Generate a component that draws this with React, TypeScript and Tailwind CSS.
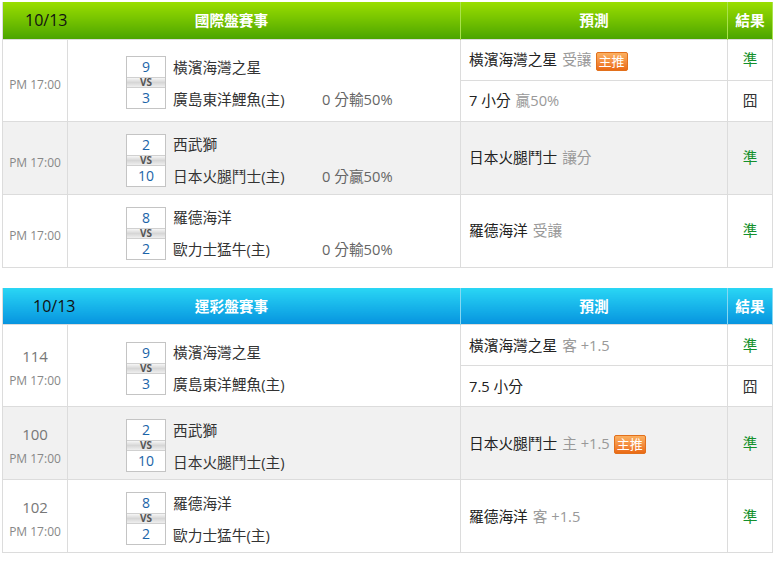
import React from 'react';

type Pred = { team: string; note: string; star?: boolean; result: '準' | '囧' };
type Match = {
  no?: string;
  away: string;
  home: string;
  as: number;
  hs: number;
  line?: string;
  preds: Pred[];
};

const intl: Match[] = [
  {
    away: '橫濱海灣之星',
    home: '廣島東洋鯉魚(主)',
    as: 9,
    hs: 3,
    line: '0 分輸50%',
    preds: [
      { team: '橫濱海灣之星', note: '受讓', star: true, result: '準' },
      { team: '7 小分', note: '贏50%', result: '囧' },
    ],
  },
  {
    away: '西武獅',
    home: '日本火腿鬥士(主)',
    as: 2,
    hs: 10,
    line: '0 分贏50%',
    preds: [{ team: '日本火腿鬥士', note: '讓分', result: '準' }],
  },
  {
    away: '羅德海洋',
    home: '歐力士猛牛(主)',
    as: 8,
    hs: 2,
    line: '0 分輸50%',
    preds: [{ team: '羅德海洋', note: '受讓', result: '準' }],
  },
];

const lottery: Match[] = [
  {
    no: '114',
    away: '橫濱海灣之星',
    home: '廣島東洋鯉魚(主)',
    as: 9,
    hs: 3,
    preds: [
      { team: '橫濱海灣之星', note: '客 +1.5', result: '準' },
      { team: '7.5 小分', note: '', result: '囧' },
    ],
  },
  {
    no: '100',
    away: '西武獅',
    home: '日本火腿鬥士(主)',
    as: 2,
    hs: 10,
    preds: [{ team: '日本火腿鬥士', note: '主 +1.5', star: true, result: '準' }],
  },
  {
    no: '102',
    away: '羅德海洋',
    home: '歐力士猛牛(主)',
    as: 8,
    hs: 2,
    preds: [{ team: '羅德海洋', note: '客 +1.5', result: '準' }],
  },
];

function ScoreBox({ a, h }: { a: number; h: number }) {
  return (
    <div className="w-[40px] border border-[#c4c4c4] bg-white text-center">
      <div className="h-[20px] text-[14px] leading-[20px] text-[#1b64a8]">{a}</div>
      <div className="h-[11px] border-y border-[#d0d0d0] bg-gradient-to-b from-[#f6f6f6] via-[#d6d6d6] to-[#efefef] text-[10px] font-bold leading-[9px] text-[#555]">
        VS
      </div>
      <div className="h-[20px] text-[14px] leading-[20px] text-[#1b64a8]">{h}</div>
    </div>
  );
}

function Star() {
  return (
    <span className="ml-[4px] inline-block h-[19px] rounded-[2px] border border-[#e2701c] bg-gradient-to-b from-[#fbb060] to-[#ea6a12] px-[2px] align-middle text-[13px] leading-[17px] text-white">
      主推
    </span>
  );
}

function PredCell({ p }: { p: Pred }) {
  return (
    <td className="border border-[#dcdcdc] pl-[8px] text-[14.7px] text-[#222]">
      {p.team}
      {p.note && <span className="ml-[5px] text-[#999]">{p.note}</span>}
      {p.star && <Star />}
    </td>
  );
}

function ResultCell({ r }: { r: string }) {
  return (
    <td
      className={`border border-[#dcdcdc] text-center text-[14.7px] ${
        r === '準' ? 'text-[#14902c]' : 'text-[#333]'
      }`}
    >
      {r}
    </td>
  );
}

function Section({
  title,
  matches,
  head,
  sep,
  datePad,
}: {
  title: string;
  matches: Match[];
  head: string;
  sep: string;
  datePad: string;
}) {
  return (
    <table className="w-[770px] table-fixed border-collapse">
      <colgroup>
        <col className="w-[65px]" />
        <col className="w-[393px]" />
        <col className="w-[267px]" />
        <col className="w-[45px]" />
      </colgroup>
      <thead>
        <tr className="h-[37px]">
          <th colSpan={2} className={`border-l border-[#dcdcdc] ${head} p-0`}>
            <div className="grid grid-cols-[1fr_auto_1fr] items-center">
              <span className={`${datePad} text-left text-[16px] font-normal text-[#111]`}>10/13</span>
              <span className="text-[14.7px] font-bold text-white">{title}</span>
              <span />
            </div>
          </th>
          <th className={`border-l ${sep} ${head} text-[14.7px] font-bold text-white`}>預測</th>
          <th className={`border-l border-r ${sep} ${head} text-[14.7px] font-bold text-white`}>結果</th>
        </tr>
      </thead>
      <tbody>
        {matches.map((m, i) => {
          const bg = i === 1 ? 'bg-[#f1f1f1]' : 'bg-white';
          const span = m.preds.length;
          const h = span === 2 ? 'h-[41px]' : 'h-[73px]';
          return (
            <React.Fragment key={i}>
              <tr className={`${h} ${bg}`}>
                <td
                  rowSpan={span}
                  className={`border border-[#dcdcdc] text-center text-[#888] ${m.no ? 'pt-[4px]' : 'pt-[10px]'}`}
                >
                  {m.no && <div className="mb-[7px] text-[15px] leading-[20px] text-[#777]">{m.no}</div>}
                  <div className="text-[12px] leading-[16px]">PM 17:00</div>
                </td>
                <td rowSpan={span} className="border border-[#dcdcdc] pt-[5px]">
                  <div className="flex items-center pl-[58px]">
                    <ScoreBox a={m.as} h={m.hs} />
                    <div className="ml-[7px] flex flex-col text-[14.7px] text-[#333]">
                      <div className="h-[22px] leading-[22px]">{m.away}</div>
                      <div className="h-[10px]" />
                      <div className="flex h-[22px] leading-[22px]">
                        <span className="w-[149px]">{m.home}</span>
                        {m.line && <span className="text-[#666]">{m.line}</span>}
                      </div>
                    </div>
                  </div>
                </td>
                <PredCell p={m.preds[0]} />
                <ResultCell r={m.preds[0].result} />
              </tr>
              {span === 2 && (
                <tr className={`h-[41px] ${bg}`}>
                  <PredCell p={m.preds[1]} />
                  <ResultCell r={m.preds[1].result} />
                </tr>
              )}
            </React.Fragment>
          );
        })}
      </tbody>
    </table>
  );
}

export default function App() {
  return (
    <div className="min-h-[566px] bg-white pl-[2px] pt-[2px] font-['Open_Sans','Noto_Sans_CJK_TC',sans-serif]">
      <Section
        title="國際盤賽事"
        matches={intl}
        head="bg-gradient-to-b from-[#9ade00] to-[#4aa500]"
        sep="border-[#a9e24c]"
        datePad="pl-[22px]"
      />
      <div className="h-[20px]" />
      <Section
        title="運彩盤賽事"
        matches={lottery}
        head="bg-gradient-to-b from-[#2ad6f4] to-[#0894df]"
        sep="border-[#86d8f2]"
        datePad="pl-[30px]"
      />
    </div>
  );
}
